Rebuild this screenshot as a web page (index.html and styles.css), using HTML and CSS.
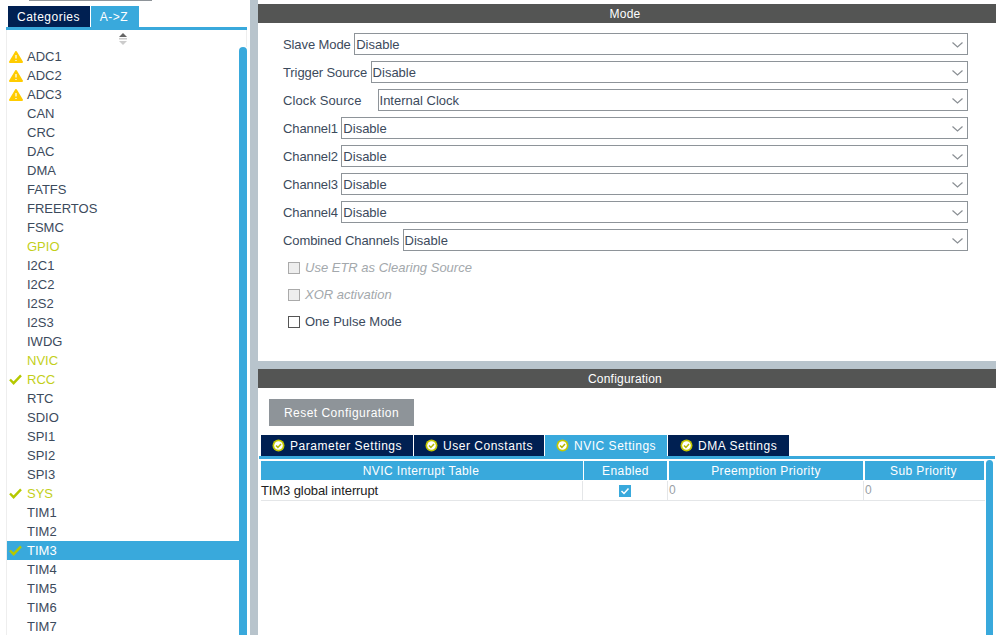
FILE: index.html
```html
<!DOCTYPE html>
<html lang="en">
<head>
<meta charset="utf-8">
<title>Timer configuration</title>
<link rel="stylesheet" href="styles.css">
<svg class="defs" width="0" height="0" aria-hidden="true">
  <symbol id="warn" viewBox="0 0 14 12"><path d="M7 1 13 11H1Z" fill="#ffcc00" stroke="#ffcc00" stroke-width="2" stroke-linejoin="round"/><path d="M7 4v3.6M7 9v1" stroke="#fff" stroke-width="1.2"/></symbol>
  <symbol id="check" viewBox="0 0 13 11"><path d="M1 5.500 4.600 9.200 12 1.400" fill="none" stroke="#b5c800" stroke-width="2.400"/></symbol>
  <symbol id="ok" viewBox="0 0 13 13"><circle cx="6.500" cy="6.500" r="6" fill="#c4c800"/><circle cx="6.500" cy="6.500" r="4.300" fill="#fff"/><path d="M4 6.500 5.900 8.400 9 4.900" fill="none" stroke="#b5b800" stroke-width="1.500"/></symbol>
  <symbol id="chev" viewBox="0 0 11 6"><path d="M.5.5 5.500 5 10.500.5" fill="none" stroke="#8a8f94" stroke-width="1.200"/></symbol>
</svg>
</head>
<body>
<div class="app">
  <aside class="left">
    <div class="searchline"></div>
    <div class="lefttabs">
      <div class="tab dark">Categories</div>
      <div class="tab blue">A-&gt;Z</div>
    </div>
    <div class="tabrule"></div>
    <div class="sortrow">
      <svg class="sort" width="10" height="13" viewBox="0 0 10 13"><path d="M5 0 9 4H1Z" fill="#666"/><rect x="1" y="5" width="8" height="1.500" fill="#ccc"/><path d="M1 8H9L5 12Z" fill="#ccc"/></svg>
    </div>
    <div class="listwrap">
      <ul class="list">
        <li class="item"><svg class="ico"><use href="#warn"/></svg>ADC1</li>
        <li class="item"><svg class="ico"><use href="#warn"/></svg>ADC2</li>
        <li class="item"><svg class="ico"><use href="#warn"/></svg>ADC3</li>
        <li class="item">CAN</li>
        <li class="item">CRC</li>
        <li class="item">DAC</li>
        <li class="item">DMA</li>
        <li class="item">FATFS</li>
        <li class="item">FREERTOS</li>
        <li class="item">FSMC</li>
        <li class="item on">GPIO</li>
        <li class="item">I2C1</li>
        <li class="item">I2C2</li>
        <li class="item">I2S2</li>
        <li class="item">I2S3</li>
        <li class="item">IWDG</li>
        <li class="item on">NVIC</li>
        <li class="item on"><svg class="ico chk"><use href="#check"/></svg>RCC</li>
        <li class="item">RTC</li>
        <li class="item">SDIO</li>
        <li class="item">SPI1</li>
        <li class="item">SPI2</li>
        <li class="item">SPI3</li>
        <li class="item on"><svg class="ico chk"><use href="#check"/></svg>SYS</li>
        <li class="item">TIM1</li>
        <li class="item">TIM2</li>
        <li class="item sel"><svg class="ico chk"><use href="#check"/></svg>TIM3</li>
        <li class="item">TIM4</li>
        <li class="item">TIM5</li>
        <li class="item">TIM6</li>
        <li class="item">TIM7</li>
      </ul>
      <div class="scroll"></div>
    </div>
  </aside>
  <div class="vsplit"></div>
  <main class="right">
    <section class="mode">
      <h2 class="bar">Mode</h2>
      <div class="form">
        <div class="row"><span class="lab">Slave Mode</span><div class="select">Disable<svg class="chev"><use href="#chev"/></svg></div></div>
        <div class="row"><span class="lab">Trigger Source</span><div class="select">Disable<svg class="chev"><use href="#chev"/></svg></div></div>
        <div class="row"><span class="lab wide">Clock Source</span><div class="select">Internal Clock<svg class="chev"><use href="#chev"/></svg></div></div>
        <div class="row"><span class="lab">Channel1</span><div class="select">Disable<svg class="chev"><use href="#chev"/></svg></div></div>
        <div class="row"><span class="lab">Channel2</span><div class="select">Disable<svg class="chev"><use href="#chev"/></svg></div></div>
        <div class="row"><span class="lab">Channel3</span><div class="select">Disable<svg class="chev"><use href="#chev"/></svg></div></div>
        <div class="row"><span class="lab">Channel4</span><div class="select">Disable<svg class="chev"><use href="#chev"/></svg></div></div>
        <div class="row"><span class="lab">Combined Channels</span><div class="select">Disable<svg class="chev"><use href="#chev"/></svg></div></div>
        <div class="cb off"><span class="box"></span>Use ETR as Clearing Source</div>
        <div class="cb off"><span class="box"></span>XOR activation</div>
        <div class="cb"><span class="box"></span>One Pulse Mode</div>
      </div>
    </section>
    <section class="config">
      <h2 class="bar">Configuration</h2>
      <div class="reset">Reset Configuration</div>
      <div class="ctabs">
        <div class="ctab t1"><svg class="okico"><use href="#ok"/></svg>Parameter Settings</div>
        <div class="ctab t2"><svg class="okico"><use href="#ok"/></svg>User Constants</div>
        <div class="ctab t3 active"><svg class="okico"><use href="#ok"/></svg>NVIC Settings</div>
        <div class="ctab t4"><svg class="okico"><use href="#ok"/></svg>DMA Settings</div>
      </div>
      <div class="ctabrule"></div>
      <div class="tablewrap">
        <div class="table">
          <div class="thead">
            <div class="c1">NVIC Interrupt Table</div>
            <div class="c2">Enabled</div>
            <div class="c3">Preemption Priority</div>
            <div class="c4">Sub Priority</div>
          </div>
          <div class="tr">
            <div class="c1 name">TIM3 global interrupt</div>
            <div class="c2 mid"><svg width="12" height="12" viewBox="0 0 12 12"><rect width="12" height="12" fill="#39a9dc"/><path d="M2.500 6 5 8.500 9.500 3.500" fill="none" stroke="#fff" stroke-width="1.500"/></svg></div>
            <div class="c3 zero">0</div>
            <div class="c4 zero">0</div>
          </div>
        </div>
        <div class="scroll2"></div>
      </div>
    </section>
  </main>
</div>
</body>
</html>
```
FILE: styles.css
```css
* { box-sizing: border-box; }
html, body { margin: 0; padding: 0; height: 635px; overflow: hidden; background: #fff; }
body { font: 13px/19px "Liberation Sans", Arial, sans-serif; color: #3c4a5c; }
.defs { position: absolute; }
.app { display: flex; height: 635px; }

.left { width: 250px; flex: none; display: flex; flex-direction: column; overflow: hidden; }
.searchline { height: 1px; width: 123px; margin-left: 29px; background: #8e9499; }
.lefttabs { display: flex; gap: 1px; margin: 5px 0 0 8px; height: 21px; }
.tab { font-size: 12px; line-height: 22px; letter-spacing: .5px; color: #fff; text-align: center; }
.tab.dark { width: 82px; padding-right: 1px; background: #002052; }
.tab.blue { width: 48px; padding-right: 2px; background: #39a9dc; }
.tabrule { height: 3px; margin: 0 3px 0 6px; background: #39a9dc; }
.sortrow { height: 17px; margin-left: 6px; margin-right: 3px; border-left: 1px solid #eee; border-right: 1px solid #eee; padding: 3px 0 0 111px; display: flex; align-items: flex-start; }
.sort { display: block; }
.listwrap { flex: 1; display: flex; margin-left: 6px; margin-right: 3px; border-left: 1px solid #eee; min-height: 0; }
.list { list-style: none; margin: 0; padding: 0; flex: 1; }
.item { position: relative; height: 19px; line-height: 19px; padding-left: 20px; white-space: nowrap; }
.ico { position: absolute; left: 2px; top: 4px; width: 14px; height: 12px; }
.ico.chk { left: 2px; top: 4px; width: 13px; height: 11px; }
.on { color: #c3cf1a; }
.sel { background: #39a9dc; color: #fff; }
.scroll { width: 8px; flex: none; background: #39a9dc; border-radius: 4px 4px 0 0; }
.vsplit { width: 8px; flex: none; background: #b8c4cc; }

.right { flex: 1; min-width: 0; padding-top: 4px; display: flex; flex-direction: column; }
.bar { margin: 0; height: 19px; padding-right: 4px; background: #545554; color: #fff; font-size: 12px; font-weight: normal; line-height: 20px; text-align: center; letter-spacing: .2px; }
.mode { height: 357px; flex: none; }
.form { padding: 10px 28px 0 25px; }
.row { display: flex; height: 22px; margin-bottom: 6px; align-items: center; }
.lab { margin-right: 3.5px; white-space: nowrap; letter-spacing: -.1px; }
.lab.wide { margin-right: 16px; letter-spacing: .1px; }
.select { position: relative; flex: 1; height: 22px; border: 1px solid #8e9499; line-height: 21px; padding-left: 1px; }
.chev { position: absolute; right: 4px; top: 8px; width: 11px; height: 6px; }
.cb { display: flex; align-items: center; height: 27px; margin-left: 5px; }
.row + .cb { margin-top: -3px; }
.box { width: 12px; height: 12px; margin-right: 5px; border: 1px solid #555; background: #fff; }
.off { color: #a3a8ac; font-style: italic; }
.off .box { border-color: #aaa; background: #eee; }

.config { flex: 1; border-top: 8px solid #b8c4cc; min-height: 0; display: flex; flex-direction: column; }
.reset { width: 145px; height: 27px; margin: 11px 0 0 11px; background: #8e9499; color: #fff; font-size: 12px; line-height: 28px; text-align: center; letter-spacing: .48px; }
.ctabs { display: flex; gap: 1px; margin: 9px 0 0 3px; height: 21px; }
.ctab { display: flex; align-items: center; padding: 1px 0 0 11px; background: #002052; color: #fff; font-size: 12px; letter-spacing: .52px; white-space: nowrap; }
.ctab.active { background: #39a9dc; }
.t1 { width: 152px; } .t2 { width: 130px; } .t3 { width: 122px; } .ctab.t4 { width: 121px; padding-left: 12px; letter-spacing: .55px; }
.okico { width: 13px; height: 13px; margin: -1px 5px 0 0; flex: none; }
.ctabrule { height: 3px; margin: 0 1px 0 1px; background: #39a9dc; }
.tablewrap { flex: 1; display: flex; padding: 2px 3px 0 3px; min-height: 0; }
.table { width: 724px; flex: none; }
.thead, .tr { display: flex; gap: 1px; }
.thead { height: 19px; color: #fff; font-size: 12px; line-height: 20px; text-align: center; letter-spacing: .4px; }
.thead div { background: #39a9dc; }
.thead .c1 { width: 322px; padding-right: 2px; }
.thead .c2 { width: 83px; }
.thead .c3 { width: 194px; margin-left: 1px; }
.thead .c4 { width: 119px; margin-left: 1px; padding-right: 2px; }
.tr { height: 20px; margin-top: 1px; border-bottom: 1px solid #e4e6e8; color: #222; }
.tr > div { border-right: 1px solid #e4e6e8; line-height: 19px; }
.tr .c1 { width: 322px; }
.tr .c2 { width: 84px; }
.tr .c3 { width: 195px; }
.tr .c4 { width: 119px; border-right: 0; }
.name { color: #222; letter-spacing: -.1px; }
.mid { display: flex; align-items: center; justify-content: center; padding-right: 2px; }
.zero { color: #9a9fa5; font-size: 12px; }
.scroll2 { width: 8px; margin-left: 1px; margin-top: -1px; background: #39a9dc; border-radius: 4px 4px 0 0; }
```
